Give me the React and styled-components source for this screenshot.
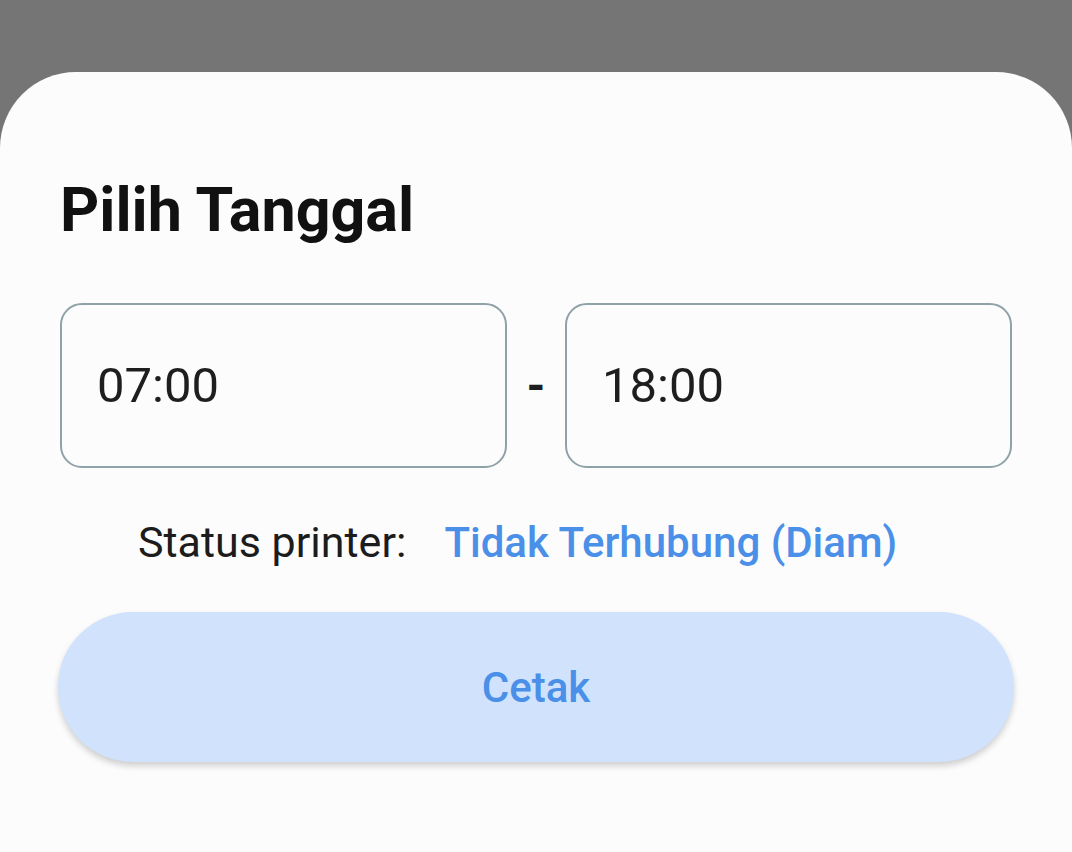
import styled, { createGlobalStyle } from "styled-components";

const GlobalStyle = createGlobalStyle`
  html, body {
    margin: 0;
    padding: 0;
    height: 100%;
    background: #757575;
    font-family: Roboto, "Liberation Sans", sans-serif;
  }
  #root {
    min-height: 100vh;
    display: flex;
    flex-direction: column;
  }
`;

const Sheet = styled.div`
  flex: 1;
  margin-top: 72px;
  background: #fcfcfc;
  border-radius: 76px 76px 0 0;
  padding: 102px 60px 0;
  display: flex;
  flex-direction: column;
`;

const Title = styled.h1`
  margin: 0;
  font-size: 61px;
  line-height: 72px;
  font-weight: 700;
  color: #111;
`;

const TimeRow = styled.div`
  margin-top: 57px;
  display: grid;
  grid-template-columns: 1fr 58px 1fr;
  align-items: center;
`;

const TimeBox = styled.div`
  height: 165px;
  box-sizing: border-box;
  border: 2px solid #8fa2a8;
  border-radius: 22px;
  padding-left: 35px;
  display: flex;
  align-items: center;
  font-size: 49px;
  color: #1e1e1e;
`;

const Dash = styled.span`
  text-align: center;
  font-size: 48px;
  font-weight: 700;
  color: #1e1e1e;
`;

const StatusRow = styled.div`
  margin-top: 49px;
  padding-left: 78px;
  display: flex;
  align-items: baseline;
  gap: 38px;
  font-size: 43px;
  line-height: 50px;
`;

const StatusLabel = styled.span`
  color: #1c1c1c;
`;

const StatusValue = styled.span`
  color: #4a8fe8;
  font-size: 42px;
  font-weight: 500;
`;

const PrintButton = styled.button`
  margin: 44px -2px 0;
  height: 150px;
  border: none;
  border-radius: 75px;
  background: #d0e2fc;
  box-shadow: 0 4px 6px rgba(0, 0, 0, 0.18);
  font-family: inherit;
  font-size: 42px;
  font-weight: 500;
  color: #4a8fe8;
`;

export default function App() {
  return (
    <>
      <GlobalStyle />
      <Sheet>
        <Title>Pilih Tanggal</Title>
        <TimeRow>
          <TimeBox>07:00</TimeBox>
          <Dash>-</Dash>
          <TimeBox>18:00</TimeBox>
        </TimeRow>
        <StatusRow>
          <StatusLabel>Status printer:</StatusLabel>
          <StatusValue>Tidak Terhubung (Diam)</StatusValue>
        </StatusRow>
        <PrintButton>Cetak</PrintButton>
      </Sheet>
    </>
  );
}
